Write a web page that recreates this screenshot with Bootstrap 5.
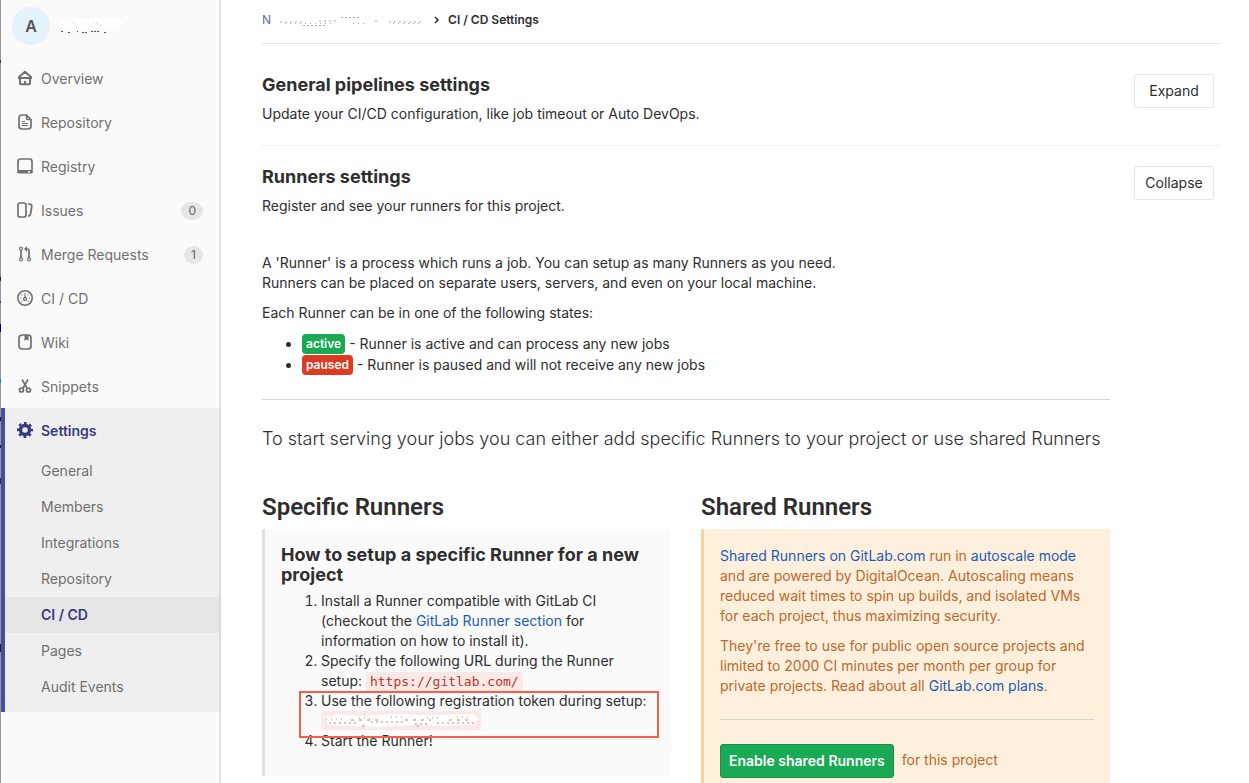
<!DOCTYPE html>
<html lang="en">
<head>
<meta charset="utf-8">
<meta name="viewport" content="width=device-width, initial-scale=1">
<title>CI / CD Settings</title>
<link href="https://cdn.jsdelivr.net/npm/bootstrap@5.3.0/dist/css/bootstrap.min.css" rel="stylesheet">
<style>
  :root { --ink:#2e2e2e; --muted:#707070; --line:#e5e5e5; --indigo:#393982; --link:#1b5cb8; }
  body { font-family:Inter,"Liberation Sans",sans-serif; font-size:14px; line-height:20px; color:var(--ink); }
  a { color:var(--link); text-decoration:none; }
  a:hover { text-decoration:underline; }
  hr { border-color:#d5d5d5; opacity:1; }
  .window-edge { width:1px; background:linear-gradient(#999 60px,#333 60px 63px,#999 63px 277px,#222 277px 281px,#999 281px 301px,#248 301px 303px,#999 303px 324px,#006 324px 332px,#999 332px 379px,#27a 379px 383px,#999 383px 417px,#222 417px 421px,#999 421px 445px,#222 445px 448px,#999 448px 478px,#234 478px 484px,#999 484px 644px,#222 644px 652px,#999 652px); }
  .sidebar { width:220px; background:#fafafa; border-right:2px solid #e2e2e2; }
  .sidebar a { color:var(--muted); text-decoration:none; }
  .project-link { height:57px; padding:0 0 5px 11px; }
  .avatar { width:38px; height:38px; border-radius:50%; background:#e3f2fd; color:#555; font-size:16px; font-weight:600; }
  .top-link { height:44px; padding:0 16px; gap:8px; }
  .top-link svg { width:16px; height:16px; margin-bottom:2px; fill:none; stroke:currentColor; stroke-width:2; flex:none; }
  .counter { background:#e6e6e6; color:#666; font-size:12px; line-height:18px; border-radius:9px; padding:0 7px; }
  .open-group { background:#efefef; border-left:4px solid #4b4ba3; margin:-1px -2px 0 0; padding:1px 0 7px; border-right:2px solid #dcdcdc; }
  .open-group .top-link { padding-left:12px; }
  .open-group a.current { color:var(--indigo); font-weight:600; }
  .sub-link { height:36px; padding-left:36px; }
  .sub-link.current { background:#e5e5e5; }
  main { padding:0 29px 0 41px; scrollbar-width:none; }
  main::-webkit-scrollbar { display:none; }
  .crumbs { height:44px; padding-bottom:4px; border-bottom:1px solid var(--line); font-size:12px; }
  .section-head { padding-right:6px; }
  .section-title { font-size:18px; line-height:22px; font-weight:700; margin-bottom:8px; }
  .first-section { padding:30px 0 21px; border-bottom:1px solid #eee; }
  .second-section { padding-top:20px; }
  .btn-toggle { width:80px; height:34px; padding:0; font-size:14px; line-height:20px; border:1px solid var(--line); border-radius:3px; color:var(--ink); background:#fff; }
  .runners { padding:37px 110px 0 0; }
  .runners p { margin-bottom:10px; }
  .states { padding-left:40px; line-height:21px; margin:0 0 24px; }
  .state-tag { display:inline-block; color:#fff; font-size:12px; font-weight:600; line-height:20px; height:20px; padding:0 4px; border-radius:4px; vertical-align:top; margin-top:1px; }
  .bg-active { background:#1aaa55; }
  .bg-paused { background:#db3b21; }
  .runners .intro { font-size:18px; line-height:30px; font-weight:300; margin:24px 0 39px; }
  .columns { --bs-gutter-x:30px; }
  .column-title { font-family:Roboto,"Liberation Sans",sans-serif; font-size:24px; line-height:28px; font-weight:600; margin-bottom:8px; }
  .callout { border-left:3px solid #e1e1e1; background:#fafafa; padding:16px 16px 25px; }
  .callout h4 { font-size:18px; line-height:20px; font-weight:700; margin-bottom:6px; }
  .callout ol { padding-left:40px; margin:0; }
  .callout-warm { background:#fff0de; border-left-color:#fcd49b; color:#c0672a; padding-top:17px; }
  .callout-warm hr { margin:23px 0 24px; }
  .callout code { font-family:"DejaVu Sans Mono","Liberation Mono",monospace; font-size:13px; line-height:16px; color:#c0341d; background:#fbe9e7; border-radius:3px; padding:2px 4px; }
  .scrubbed { display:block; }
  .token { display:inline-block; width:160px; height:19px; background:#fbe9e7; border-radius:3px; vertical-align:top; }
  .marked { position:relative; }
  .marked::after { content:""; position:absolute; top:0; left:-22px; right:-4px; height:47px; border:2px solid #f4604a; pointer-events:none; }
  .btn-enable { height:34px; padding:0 8px; font-size:14px; font-weight:600; line-height:20px; color:#fff; background:#1aaa55; border:1px solid #168f48; border-radius:3px; }
  .enable-note { padding-top:6px; }
</style>
</head>
<body>
<div class="d-flex vh-100 overflow-hidden">
  <div class="window-edge flex-shrink-0"></div>
  <nav class="sidebar flex-shrink-0" aria-label="Project">
    <a href="#" class="project-link d-flex align-items-center" aria-label="Project home">
      <span class="avatar d-flex align-items-center justify-content-center">A</span>
      <svg class="scrubbed ms-2" width="66" height="20" aria-hidden="true"><path d="M2 4l58-2 5 5-5 6-55 2-4-5z" fill="#fff"/><path d="M3 15.500h3m4 1h3m6-1h1m4 1h5m4-1h8m5 1h2" stroke="#555" stroke-dasharray="2 1"/><path d="M15 7h3m8 1h2m7-1h4m3 2h3" stroke="#ccc" stroke-dasharray="1 2"/></svg>
    </a>
    <a href="#" class="top-link d-flex align-items-center"><svg viewBox="0 0 16 16"><path d="M1 8h14M1.500 7.500L8 1.800l6.500 5.700M3 8v5.500q0 .7.700.7h8.600q.7 0 .7-.7V8M8 11v3" stroke-linejoin="round"/></svg>Overview</a>
    <a href="#" class="top-link d-flex align-items-center"><svg viewBox="0 0 16 16"><path d="M9.500 1H5Q2 1 2 4v8q0 3 3 3h6q3 0 3-3V5.500zM9.500 1v3q0 1.500 1.500 1.500h3" stroke-width="1.700"/><path d="M5 7.500h3M5 9.500h6M5 11.500h6" stroke-width="1"/></svg>Repository</a>
    <a href="#" class="top-link d-flex align-items-center"><svg viewBox="0 0 16 16"><path d="M1 12V3.500Q1 1 3.500 1h9Q15 1 15 3.500V12" stroke-width="1.700"/><path d="M1.500 12h13q1.500 0 1.500 1.700T14.500 15.500h-13Q0 15.500 0 13.700 0 12 1.500 12zM11 13v1.500h2V13z" fill="currentColor" fill-rule="evenodd" stroke="none"/></svg>Registry</a>
    <a href="#" class="top-link d-flex align-items-center"><svg viewBox="0 0 16 16"><g stroke-width="1.700"><rect x="1" y="1" width="8" height="14" rx="2"/><path d="M11 2h1.500q2.500 0 2.300 2.500L13.500 12q-.4 2-2.500 2"/></g></svg>Issues<span class="counter ms-auto">0</span></a>
    <a href="#" class="top-link d-flex align-items-center"><svg viewBox="0 0 16 16"><g stroke-width="1.200"><circle cx="4" cy="2.500" r="1.500"/><circle cx="4" cy="13.500" r="1.500"/><circle cx="12" cy="13.500" r="1.500"/></g><path d="M4 4v8M12 12V5q0-2-2-2H8" stroke-width="1.700"/><path d="M10 0v6L7 3z" fill="currentColor" stroke="none"/></svg>Merge Requests<span class="counter ms-auto">1</span></a>
    <a href="#" class="top-link d-flex align-items-center"><svg viewBox="0 0 16 16"><circle cx="8" cy="8" r="7.200" stroke-width="1.600"/><path d="M8 3v1M4.500 4.500l.7.700M11.500 4.500l-.7.700M3 8h1M12 8h1M4.500 11.500l.7-.7M11.500 11.500l-.7-.7" stroke-width="1.200"/><path d="M8 4.500V8" stroke-width="1.300"/><circle cx="8" cy="9" r="1.500" stroke-width="1.300"/></svg>CI / CD</a>
    <a href="#" class="top-link d-flex align-items-center"><svg viewBox="0 0 16 16"><rect x="2" y="1" width="12" height="14" rx="3" stroke-width="1.700"/><path d="M7.500 1h4v6l-2-1.500-2 1.500z" fill="currentColor" stroke="none"/></svg>Wiki</a>
    <a href="#" class="top-link d-flex align-items-center"><svg viewBox="0 0 16 16"><g stroke-width="1.700"><circle cx="4.500" cy="12" r="2"/><circle cx="11.500" cy="12" r="2"/><path d="M5 1.500l5.200 9M11 1.500l-5.200 9"/></g></svg>Snippets</a>
    <div class="open-group">
      <a href="#" class="top-link current d-flex align-items-center"><svg viewBox="0 0 16 16"><circle cx="8" cy="8" r="4.500" stroke-width="3.400"/><circle cx="8" cy="8" r="6.800" stroke-width="2.600" stroke-dasharray="2.670" stroke-dashoffset="1.300"/></svg>Settings</a>
      <a href="#" class="sub-link d-flex align-items-center">General</a>
      <a href="#" class="sub-link d-flex align-items-center">Members</a>
      <a href="#" class="sub-link d-flex align-items-center">Integrations</a>
      <a href="#" class="sub-link d-flex align-items-center">Repository</a>
      <a href="#" class="sub-link current d-flex align-items-center" aria-current="page">CI / CD</a>
      <a href="#" class="sub-link d-flex align-items-center">Pages</a>
      <a href="#" class="sub-link d-flex align-items-center">Audit Events</a>
    </div>
  </nav>
  <main class="flex-grow-1 overflow-auto">
    <div class="crumbs d-flex align-items-center">
      <a href="#" class="text-secondary">N</a>
      <svg class="scrubbed" width="155" height="14" aria-hidden="true"><g stroke="#aaa"><path d="M9 9h22M48 8h18M104 8h3M118 9h32" stroke-dasharray="2 3"/><path d="M14 10.500h50M82 10.500h12M122 10.500h30" stroke-dasharray="1 4"/><path d="M32 12.500h22M70 4.500h18" stroke-dasharray="2 2"/></g></svg>
      <svg width="6" height="8" class="mx-2" viewBox="0 0 6 8" fill="none" stroke="#2e2e2e" stroke-width="1.500" aria-hidden="true"><path d="M1 1l3 3-3 3"/></svg>
      <strong class="fw-semibold">CI / CD Settings</strong>
    </div>
    <section class="first-section">
      <div class="section-head d-flex justify-content-between align-items-start">
        <div><h4 class="section-title">General pipelines settings</h4><p class="mb-0">Update your CI/CD configuration, like job timeout or Auto DevOps.</p></div>
        <button type="button" class="btn btn-toggle">Expand</button>
      </div>
    </section>
    <section class="second-section">
      <div class="section-head d-flex justify-content-between align-items-start">
        <div><h4 class="section-title">Runners settings</h4><p class="mb-0">Register and see your runners for this project.</p></div>
        <button type="button" class="btn btn-toggle">Collapse</button>
      </div>
      <div class="runners">
        <p>A 'Runner' is a process which runs a job. You can setup as many Runners as you need.<br>Runners can be placed on separate users, servers, and even on your local machine.</p>
        <p>Each Runner can be in one of the following states:</p>
        <ul class="states">
          <li><span class="state-tag bg-active">active</span> - Runner is active and can process any new jobs</li>
          <li><span class="state-tag bg-paused">paused</span> - Runner is paused and will not receive any new jobs</li>
        </ul>
        <hr class="m-0">
        <p class="intro">To start serving your jobs you can either add specific Runners to your project or use shared Runners</p>
        <div class="row columns">
          <div class="col-6">
            <h3 class="column-title">Specific Runners</h3>
            <div class="callout">
              <h4>How to setup a specific Runner for a new project</h4>
              <ol>
                <li>Install a Runner compatible with GitLab CI (checkout the <a href="#">GitLab Runner section</a> for information on how to install it).</li>
                <li>Specify the following URL during the Runner setup: <code>https://gitlab.com/</code></li>
                <li class="marked">Use the following registration token during setup:<br><svg class="token" viewBox="0 0 160 19" aria-hidden="true"><path d="M4 4l6 2 5-3 30 2 20-2 50 1 38-1 4 5-4 6-40 1-20-1-40 2-46-2z" fill="#fff"/><g stroke="#c98076"><path d="M5 8h20M38 7h12M70 6h12M106 7h14M136 6h12" stroke-dasharray="1 4"/><path d="M8 12h30M50 11h32M94 13h14M116 12h38" stroke-dasharray="2 3"/><path d="M41 15h7M96 15h2M30 9h30M84 9h26M128 9h24" stroke-dasharray="3 5"/></g></svg></li>
                <li>Start the Runner!</li>
              </ol>
            </div>
          </div>
          <div class="col-6">
            <h3 class="column-title">Shared Runners</h3>
            <div class="callout callout-warm">
              <p><a href="#">Shared Runners on GitLab.com</a> run in <a href="#">autoscale mode</a> and are powered by DigitalOcean. Autoscaling means reduced wait times to spin up builds, and isolated VMs for each project, thus maximizing security.</p>
              <p>They're free to use for public open source projects and limited to 2000 CI minutes per month per group for private projects. Read about all <a href="#">GitLab.com plans</a>.</p>
              <hr>
              <div class="d-flex gap-2"><button type="button" class="btn btn-enable">Enable shared Runners</button><span class="enable-note">for this project</span></div>
            </div>
          </div>
        </div>
      </div>
    </section>
  </main>
</div>
<script src="https://cdn.jsdelivr.net/npm/bootstrap@5.3.0/dist/js/bootstrap.bundle.min.js"></script>
</body>
</html>
